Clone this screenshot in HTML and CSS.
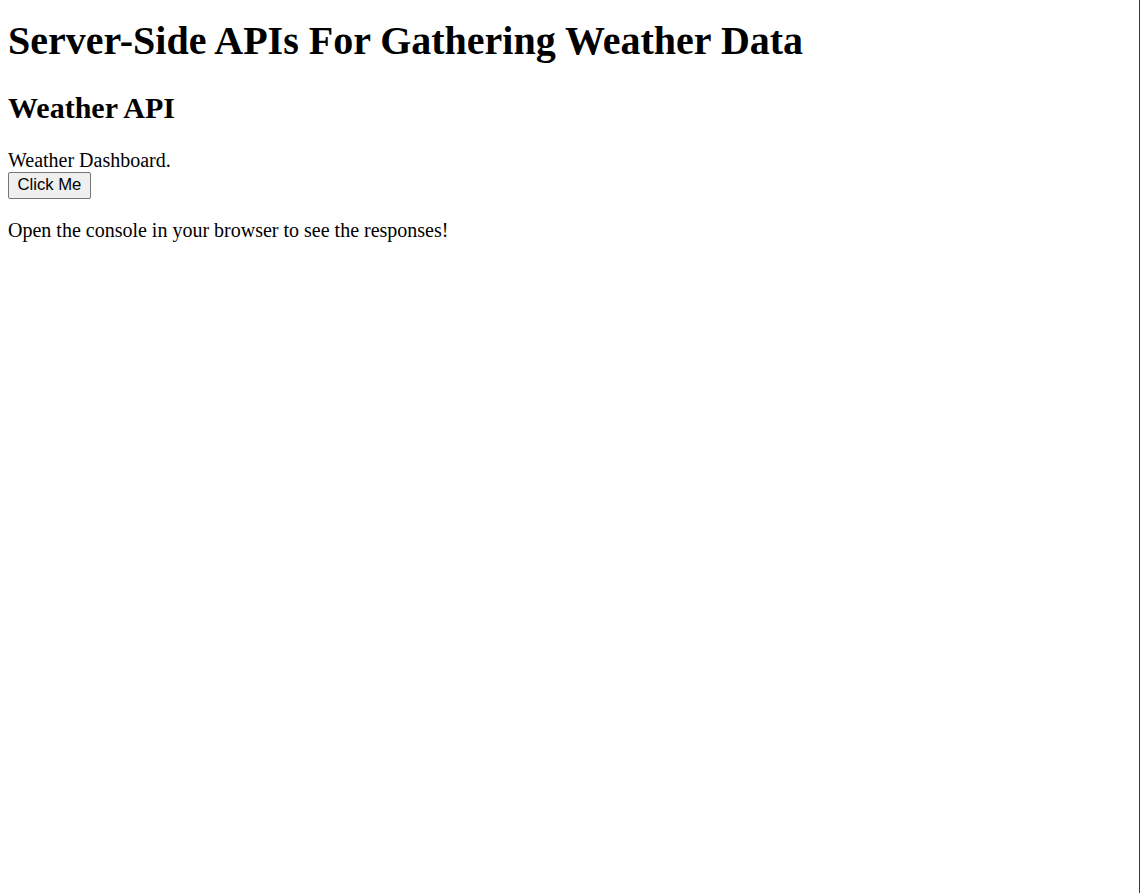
FILE: index.html
```html
<!DOCTYPE html>
<html lang="en">
<head>
<meta charset="utf-8">
<title>Weather API</title>
<link rel="stylesheet" href="styles.css">
</head>
<body>
<h1 class="title">Server-Side APIs For Gathering Weather Data</h1>
<h2 class="subtitle">Weather API</h2>
<p class="intro">Weather Dashboard.<br><button class="btn" type="button">Click Me</button></p>
<p class="note">Open the console in your browser to see the responses!</p>
</body>
</html>
```
FILE: styles.css
```css
html {
  background: #fff;
}
body {
  margin: 8px;
  font-family: "Liberation Serif", "Times New Roman", serif;
  font-size: 20px;
  color: #000;
}
body::after {
  content: "";
  position: fixed;
  top: 0;
  bottom: 0;
  left: 1139px;
  width: 1px;
  background: #3a3a3a;
}
.title {
  font-size: 40px;
  margin: 9px 0 26.8px;
}
.subtitle {
  font-size: 30px;
  margin: 24.9px 0 23.9px;
}
.intro,
.note {
  margin: 20px 0;
}
.btn {
  font-family: "Liberation Sans", Arial, sans-serif;
  font-size: 16.67px;
  padding: 2.5px 8.5px;
  background: #efefef;
  border: 1px solid #767676;
  border-radius: 2px;
  color: #000;
}
```
